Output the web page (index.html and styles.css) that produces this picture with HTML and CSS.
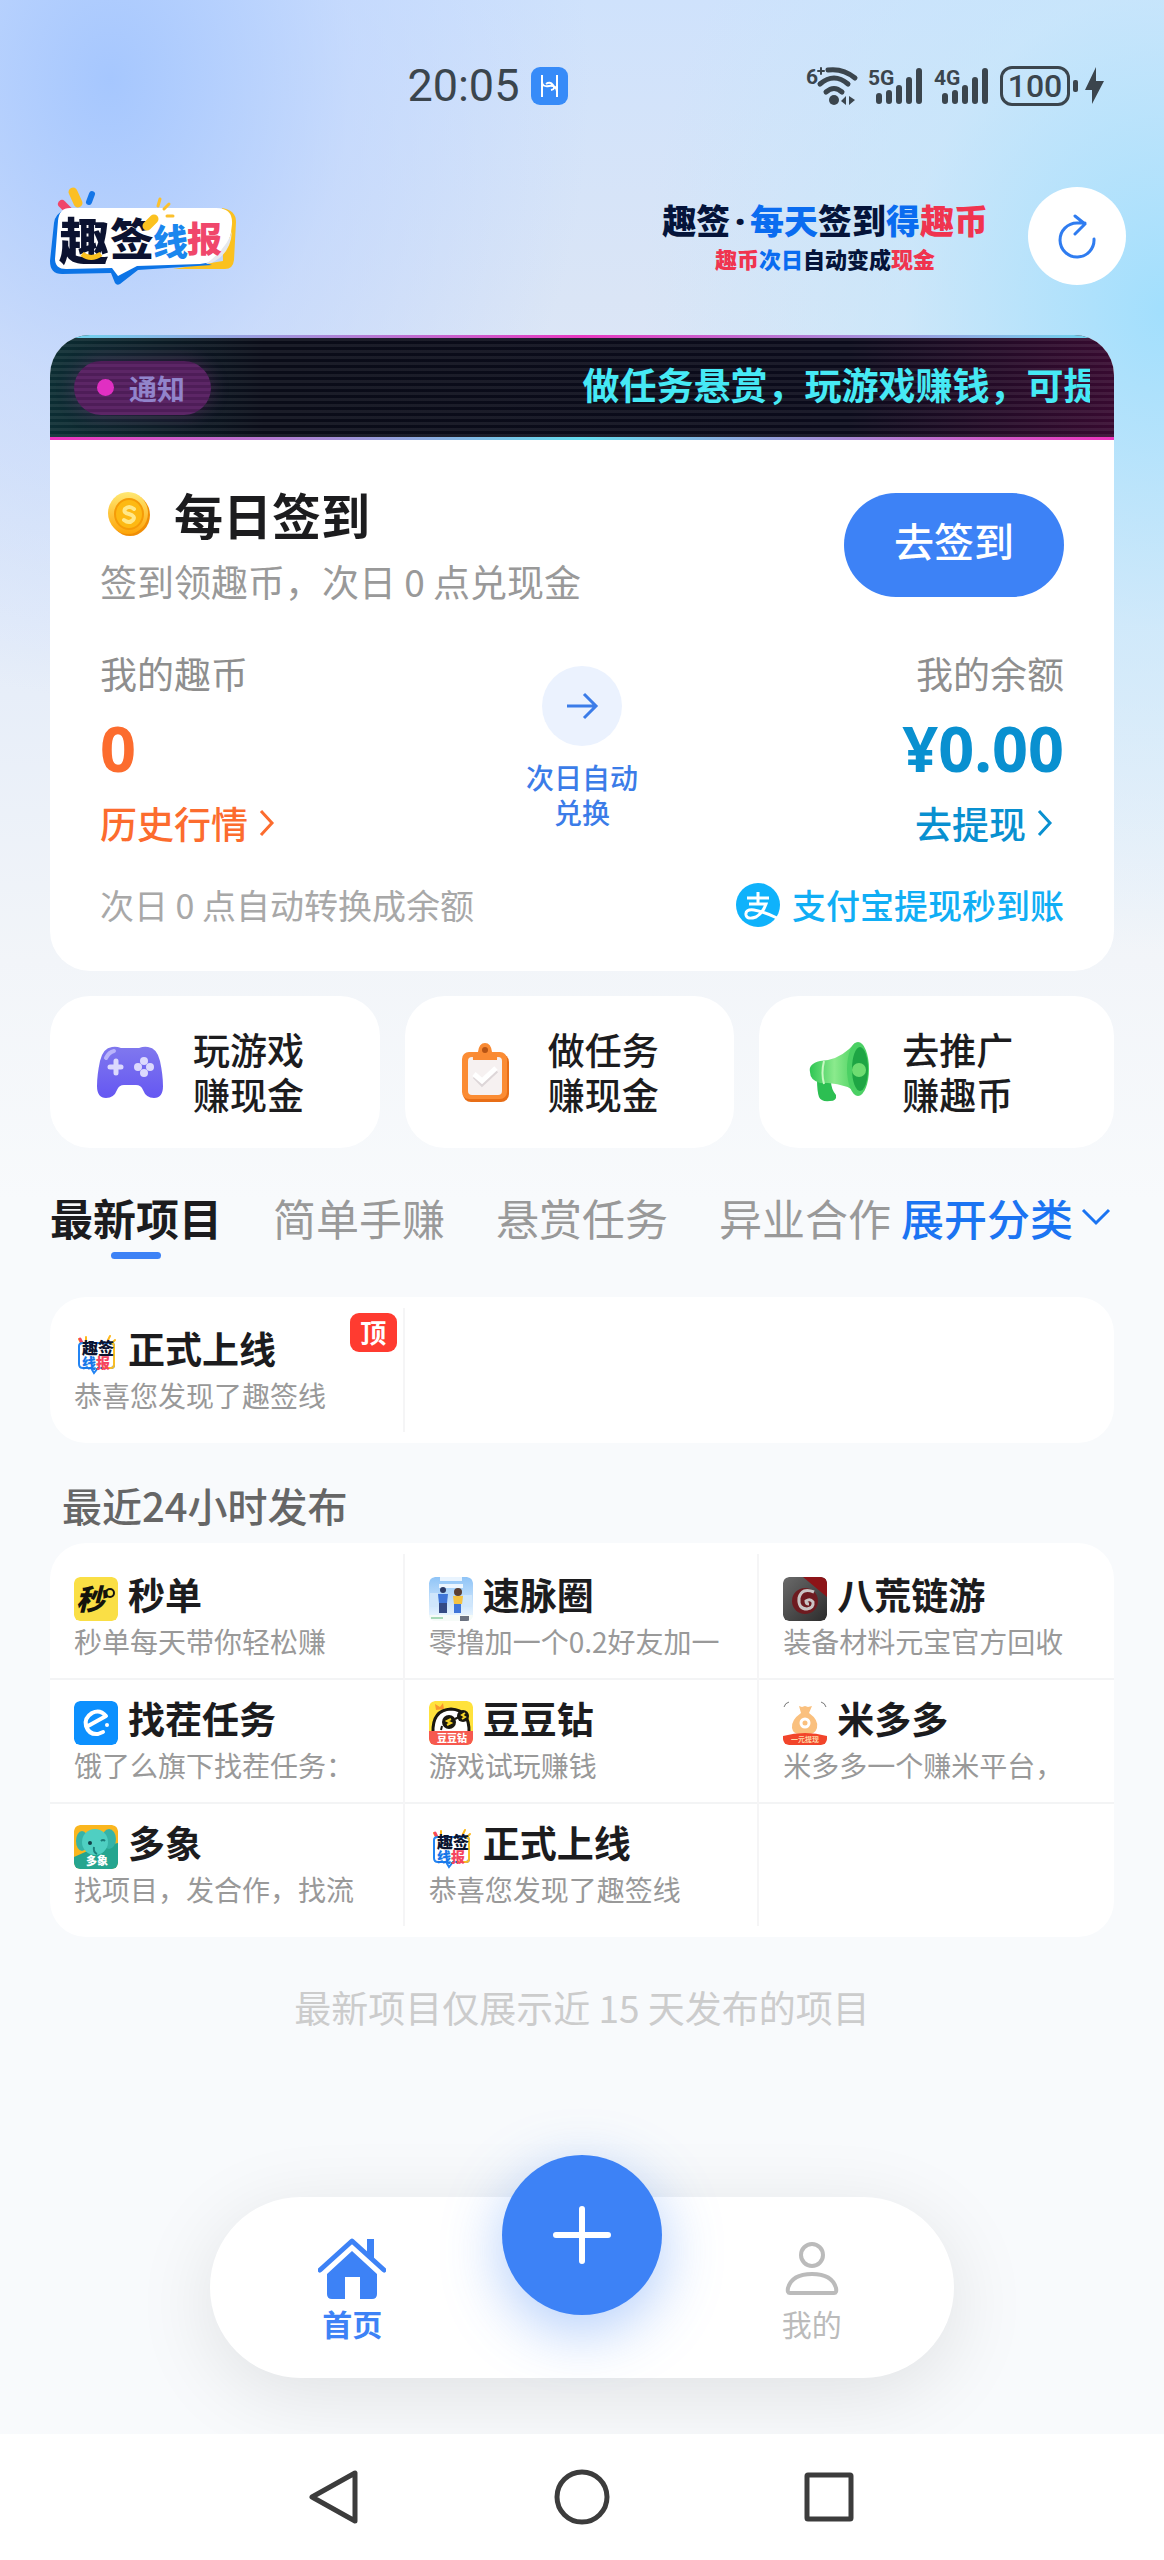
FILE: index.html
```html
<!DOCTYPE html>
<html lang="zh-CN">
<head>
  <meta charset="UTF-8">
  <meta name="viewport" content="width=device-width, initial-scale=1">
  <title>趣签线报</title>
  <link rel="stylesheet" href="styles.css">
</head>
<body>
<svg class="defs" width="0" height="0">
  <defs>
    <symbol id="quqian" viewBox="0 0 44 44">
      <path d="M7 12l-2-4M12 10V6M34 9l2-4M38 12l3-3" stroke="#ffb81c" stroke-width="2" stroke-linecap="round"/>
      <path d="M6 8l2 4" stroke="#f5455f" stroke-width="3" stroke-linecap="round"/>
      <path d="M9 12h28q3 0 3 3v19q0 3-3 3H24l-4 5-3-5H9q-4 0-4-4V15q0-3 4-3z" fill="#fff" stroke="#2384f3" stroke-width="2"/>
      <path d="M37 12q3 0 3 3v19q0 3-3 3h-8" fill="none" stroke="#f8bd26" stroke-width="2"/>
      <text x="8" y="23" font-size="16" font-weight="900" fill="#0c1430">趣签</text>
      <text x="8" y="37" font-size="14" font-weight="900" fill="#1677e8">线<tspan fill="#f5455f">报</tspan></text>
    </symbol>
    <linearGradient id="gold" x1="0" y1="0" x2="0" y2="1">
      <stop offset="0" stop-color="#ffe873"/><stop offset="1" stop-color="#fda509"/>
    </linearGradient>
    <linearGradient id="purple" x1="0" y1="0" x2="0" y2="1">
      <stop offset="0" stop-color="#8078ee"/><stop offset="1" stop-color="#6557f2"/>
    </linearGradient>
    <linearGradient id="green" x1="0" y1="0" x2="1" y2="0">
      <stop offset="0" stop-color="#2fc653"/><stop offset=".5" stop-color="#8bea8d"/><stop offset="1" stop-color="#45cf5c"/>
    </linearGradient>
    <linearGradient id="sky" x1="0" y1="0" x2="0" y2="1">
      <stop offset="0" stop-color="#8fc4f7"/><stop offset="1" stop-color="#f2f9ff"/>
    </linearGradient>
    <linearGradient id="metal" x1="0" y1="0" x2="1" y2="1">
      <stop offset="0" stop-color="#6a6a6a"/><stop offset="1" stop-color="#2c2c2c"/>
    </linearGradient>
  </defs>
</svg>

<div class="page">
  <div class="status">
    <div class="status-left">
      <span class="time">20:05</span>
      <svg width="37" height="38" viewBox="0 0 37 38"><rect width="37" height="38" rx="9" fill="#378bf8"/><path d="M11 8v22M26 8v22M11 15q0 5 7 4t8 5M15 17q4-3 7 1t-2 5" fill="none" stroke="#fff" stroke-width="2"/></svg>
    </div>
    <div class="status-right">
      <svg width="52" height="40" viewBox="0 0 52 40" fill="none" stroke="#3b454d" stroke-linecap="round">
        <text x="0" y="18" font-size="21" font-weight="700" fill="#3b454d" stroke="none" class="num">6</text>
        <path d="M12 5h6M15 2v6" stroke-width="2"/>
        <path d="M22 4q15-2 27 8M14 18q14-12 28 0M20 26q8-7 16 0" stroke-width="5"/>
        <circle cx="28" cy="34" r="5" fill="#3b454d" stroke="none"/>
        <path d="M40 30v9l-5-4zM43 30v9l6-5z" fill="#3b454d" stroke="none"/>
      </svg>
      <svg width="56" height="40" viewBox="0 0 56 40" stroke="#3b454d" stroke-width="6" stroke-linecap="round">
        <text x="0" y="19" font-size="21" font-weight="700" fill="#3b454d" stroke="none" class="num">5G</text>
        <path d="M11 30v5M21 27v8M31 22v13M41 14v21M51 5v30"/>
      </svg>
      <svg width="56" height="40" viewBox="0 0 56 40" stroke="#3b454d" stroke-width="6" stroke-linecap="round">
        <text x="0" y="19" font-size="21" font-weight="700" fill="#3b454d" stroke="none" class="num">4G</text>
        <path d="M11 30v5M21 27v8M31 22v13M41 14v21M51 5v30"/>
      </svg>
      <div class="battery">100</div>
      <svg width="26" height="40" viewBox="0 0 26 40" fill="#3b454d"><path d="M16 1v14h8L12 38V24H5z"/></svg>
    </div>
  </div>

  <header class="header">
    <svg class="logo" width="186" height="102" viewBox="0 0 186 102" role="img" aria-label="趣签线报">
      <g stroke-linecap="round">
        <path d="M12 19l7 7" stroke="#f0466a" stroke-width="8"/>
        <path d="M23 7l5 11" stroke="#fbbf24" stroke-width="9"/>
        <path d="M42 9l-3 8" stroke="#1476e8" stroke-width="6"/>
      </g>
      <path d="M172 23q14 2 14 14l-2 38q-1 9-9 9h-52l50-8z" fill="#fbc11f"/>
      <path d="M14 25Q5 29 4 38L0 76q0 13 12 13l49-1q2 5 4 10 2 3 5 1l18-14 74-5-90-30z" fill="#0c74e6"/>
      <path d="M20 23h146q17 0 16 16-1 20-12 31-7 8-20 9l-63 2-19 10-6-8-46 1Q5 84 5 74l3-38q1-13 12-13z" fill="#fff"/>
      <path d="M182 46q-1 21-17 30-4 3-9 3 22-17 26-33z" fill="#e6e8ee"/>
      <g font-weight="900">
        <text x="9" y="75" font-size="50" fill="#0b1230">趣</text>
        <text x="60" y="71" font-size="44" fill="#0b1230">签</text>
        <text x="103" y="70" font-size="35" fill="#1a86ee">线</text>
        <text x="137" y="67" font-size="35" fill="#f0476b">报</text>
      </g>
      <path d="M32 69q9 7 19 0" fill="none" stroke="#fbc11f" stroke-width="5"/>
      <path d="M97 41l7-7" stroke="#fbc11f" stroke-width="9" stroke-linecap="round"/>
      <path d="M110 14l-2 7M119 19l-5 5M123 31h-6" stroke="#fbc02d" stroke-width="3" stroke-linecap="round"/>
    </svg>
    <div class="slogan">
      <div class="slogan-main"><b>趣签</b><b class="dot">·</b><b class="blue">每天</b><b>签到</b><b class="blue">得</b><b class="red">趣币</b></div>
      <div class="slogan-sub"><b class="red">趣币</b><b class="blue">次日</b><b>自动变成</b><b class="red">现金</b></div>
    </div>
    <button class="refresh" type="button" aria-label="刷新">
      <svg width="40" height="48" viewBox="0 0 40 48" fill="none" stroke="#2f7cf0" stroke-width="3" stroke-linecap="round" stroke-linejoin="round"><path d="M37 27A17 17 0 1 1 20 11h8M18 4l10 8-10 10"/></svg>
    </button>
  </header>

  <main class="main">
    <section class="card">
      <div class="notice">
        <span class="tag"><i></i>通知</span>
        <div class="marquee"><span>做任务悬赏，玩游戏赚钱，可提现</span></div>
      </div>
      <div class="card-body">
        <div class="sign">
          <div>
            <h1 class="sign-title">
              <svg width="42" height="46" viewBox="0 0 42 46"><ellipse cx="22" cy="24" rx="20" ry="21" fill="#f08e05"/><ellipse cx="20" cy="22" rx="20" ry="21" fill="url(#gold)"/><ellipse cx="21" cy="23" rx="14" ry="15" fill="#fdb913" stroke="#f59b07" stroke-width="2"/><path d="M26 18q-5-4-9 0-2 4 4 5 7 2 4 6-4 4-9 0" fill="none" stroke="#ffe889" stroke-width="4" stroke-linecap="round"/></svg>
              每日签到
            </h1>
            <p class="sub">签到领趣币，次日 0 点兑现金</p>
          </div>
          <button class="sign-btn" type="button">去签到</button>
        </div>

        <div class="assets">
          <div class="asset coin">
            <span class="label">我的趣币</span>
            <strong>0</strong>
            <a href="#">历史行情<svg width="18" height="28" viewBox="0 0 18 28"><path d="M3 2l11 12L3 26"/></svg></a>
          </div>
          <div class="exchange">
            <span class="arrow"><svg width="34" height="30" viewBox="0 0 34 30"><path d="M2 15h29M19 3l12 12-12 12"/></svg></span>
            次日自动<br>兑换
          </div>
          <div class="asset balance">
            <span class="label">我的余额</span>
            <strong>¥0.00</strong>
            <a href="#">去提现<svg width="18" height="28" viewBox="0 0 18 28"><path d="M3 2l11 12L3 26"/></svg></a>
          </div>
        </div>

        <div class="tips">
          <span>次日 0 点自动转换成余额</span>
          <span class="alipay">
            <svg width="44" height="44" viewBox="0 0 44 44"><circle cx="22" cy="22" r="22" fill="#0fb2fb"/><path d="M11 15h22M22 9v12M13 21h17q-3 9-10 13-9 3-10-2-1-6 8-5 8 1 23 8" fill="none" stroke="#fff" stroke-width="3"/></svg>
            支付宝提现秒到账
          </span>
        </div>
      </div>
    </section>

    <section class="features">
      <a class="feature" href="#">
        <svg width="76" height="66" viewBox="0 0 76 66"><path d="M20 8q4-1 9 1h18q5-2 9-1 9 1 12 14 3 14 3 25 0 12-9 12-8 0-11-8-2-5-7-5H32q-5 0-7 5-3 8-11 8-9 0-9-12Q5 36 8 22 11 9 20 8z" fill="url(#purple)"/><path d="M14 19q3-6 8-7" stroke="#b9b3fb" stroke-width="4" stroke-linecap="round" fill="none"/><path d="M18 28h11M24 22v12" stroke="#dcd9fd" stroke-width="5" stroke-linecap="round"/><g fill="#dcd9fd"><circle cx="52" cy="22" r="4"/><circle cx="52" cy="34" r="4"/><circle cx="46" cy="28" r="4"/><circle cx="58" cy="28" r="4"/></g></svg>
        <span>玩游戏<br>赚现金</span>
      </a>
      <a class="feature" href="#">
        <svg width="76" height="66" viewBox="0 0 76 66"><rect x="16" y="15" width="46" height="48" rx="8" fill="#e86e17"/><rect x="15" y="13" width="45" height="47" rx="7" fill="#fb8c34"/><rect x="21" y="18" width="34" height="38" rx="4" fill="#f6f1f1"/><path d="M26 21q-1-7 5-8 1-9 7-9t7 9q6 1 5 8z" fill="#f98a33"/><circle cx="38" cy="11" r="3" fill="#b75414"/><path d="M28 37l7 7 14-13" fill="none" stroke="#ddd6d8" stroke-width="6"/><path d="M27 35l8 7 14-13" fill="none" stroke="#fff" stroke-width="5"/></svg>
        <span>做任务<br>赚现金</span>
      </a>
      <a class="feature" href="#">
        <svg width="76" height="66" viewBox="0 0 76 66"><path d="M16 40l14 2q0 8 5 14 1 6-6 6-9 1-11-4-2-6-2-18z" fill="#2cbf52"/><path d="M19 22Q7 25 9 33q0 8 10 11l8 0q20 1 31 12L54 4Q42 18 27 21z" fill="url(#green)"/><path d="M23 22q-3 12 0 23" fill="none" stroke="#c8f8c2" stroke-width="2"/><ellipse cx="57" cy="30" rx="11" ry="27" fill="#4bd064"/><ellipse cx="59" cy="30" rx="8" ry="22" fill="#1ea544"/><circle cx="58" cy="31" r="7" fill="#6edc71"/></svg>
        <span>去推广<br>赚趣币</span>
      </a>
    </section>

    <nav class="tabs">
      <div class="tab-list">
        <a class="active" href="#">最新项目</a>
        <a href="#">简单手赚</a>
        <a href="#">悬赏任务</a>
        <a href="#">异业合作</a>
      </div>
      <a class="more" href="#">展开分类<svg width="30" height="18" viewBox="0 0 30 18"><path d="M2 2l13 13L28 2"/></svg></a>
    </nav>

    <section class="projects">
      <a class="item" href="#">
        <span class="name"><svg width="44" height="44"><use href="#quqian"/></svg>正式上线</span>
        <span class="desc">恭喜您发现了趣签线</span>
        <em class="top">顶</em>
      </a>
    </section>

    <h2 class="heading">最近24小时发布</h2>

    <section class="projects">
      <a class="item" href="#">
        <span class="name"><svg width="44" height="44" viewBox="0 0 44 44"><rect width="44" height="44" rx="6" fill="#fadf45"/><text x="2" y="33" font-size="29" font-weight="900" font-style="italic" fill="#14130c">秒</text><circle cx="36" cy="16" r="4" fill="none" stroke="#14130c" stroke-width="2"/></svg>秒单</span>
        <span class="desc">秒单每天带你轻松赚</span>
      </a>
      <a class="item" href="#">
        <span class="name"><svg width="44" height="44" viewBox="0 0 44 44"><rect width="44" height="44" rx="6" fill="url(#sky)"/><path d="M11 0h22v4H11zM10 7h24v4H10z" fill="#fff" opacity=".8"/><path d="M1 16h8v14H1zM34 18h9v12h-9z" fill="#cfe6fb"/><circle cx="14" cy="13" r="3" fill="#2d3a66"/><path d="M9 17h10l-1 9h-8z" fill="#3f75d8"/><path d="M10 26h8v10h-8z" fill="#344a84"/><circle cx="29" cy="15" r="4" fill="#5c4033"/><path d="M24 19h10l-1 8h-8z" fill="#f5c342"/><path d="M25 27h7v9h-7z" fill="#3f75d8"/><path d="M0 38h44v6H0z" fill="#f6fbf8"/><path d="M2 40h12v2H2z" fill="#a7d9b8"/><path d="M31 39h9v5h-9z" fill="#6b7280"/></svg>速脉圈</span>
        <span class="desc">零撸加一个0.2好友加一</span>
      </a>
      <a class="item" href="#">
        <span class="name"><svg width="44" height="44" viewBox="0 0 44 44"><rect width="44" height="44" rx="6" fill="url(#metal)"/><path d="M20 0h18q6 0 6 6v14z" fill="#8d1418"/><circle cx="22" cy="24" r="13" fill="#6e1b20"/><path d="M31 15q-12-5-15 6-1 11 8 11 7-1 6-7-3-4-7-1 0 3 3 3" fill="none" stroke="#c9c4c4" stroke-width="3"/></svg>八荒链游</span>
        <span class="desc">装备材料元宝官方回收</span>
      </a>
      <a class="item" href="#">
        <span class="name"><svg width="44" height="44" viewBox="0 0 44 44"><rect width="44" height="44" rx="6" fill="#0c90fe"/><path d="M14 25l18-10q-6-7-14-3-8 5-6 13 3 9 12 8l5-2" fill="none" stroke="#fff" stroke-width="4" stroke-linecap="round" stroke-linejoin="round"/><circle cx="33" cy="24" r="2" fill="#fff"/></svg>找茬任务</span>
        <span class="desc">饿了么旗下找茬任务：</span>
      </a>
      <a class="item" href="#">
        <span class="name"><svg width="44" height="44" viewBox="0 0 44 44"><rect width="44" height="44" rx="6" fill="#ffe23c"/><path d="M7 9l-1-6 5 3 3-4 1 6z" fill="#f9972d"/><path d="M4 32Q3 9 22 8q19 1 18 24z" fill="#fff" stroke="#19170f" stroke-width="3"/><circle cx="20" cy="21" r="7" fill="#19170f"/><circle cx="34" cy="15" r="6" fill="#19170f"/><path d="M13 25l-1 4M26 18l4-2" stroke="#19170f" stroke-width="2"/><path d="M22 18l-4 2 4 2-4 2M36 12l-3 2 3 2-3 2" fill="none" stroke="#f5d428" stroke-width="2"/><path d="M0 30h44v8q0 6-6 6H6q-6 0-6-6z" fill="#f6594f"/><text x="8" y="41" font-size="10" font-weight="900" fill="#fff">豆豆钻</text></svg>豆豆钻</span>
        <span class="desc">游戏试玩赚钱</span>
      </a>
      <a class="item" href="#">
        <span class="name"><svg width="44" height="44" viewBox="0 0 44 44"><path d="M1 6q1-4 5-5M38 1q4 1 5 5" fill="none" stroke="#777"/><path d="M16 5l3 1 3-1 3 1 4-1-3 7q10 7 8 15-2 6-8 6h-9q-7 0-8-6-1-8 9-15z" fill="#fac07e"/><circle cx="22" cy="22" r="4" fill="#fac07e" stroke="#fff" stroke-width="3"/><path d="M0 35q22-6 44 0v4q0 5-6 5H6q-6 0-6-5z" fill="#f2452b"/><text x="8" y="41" font-size="7" fill="#ffd9a8">一元提现</text></svg>米多多</span>
        <span class="desc">米多多一个赚米平台，</span>
      </a>
      <a class="item" href="#">
        <span class="name"><svg width="44" height="44" viewBox="0 0 44 44"><rect width="44" height="44" rx="6" fill="#fab61e"/><path d="M0 32q20-10 44-14v20q0 6-6 6H6q-6 0-6-6z" fill="#25a58f"/><ellipse cx="8" cy="16" rx="6" ry="10" fill="#36b3a7"/><ellipse cx="35" cy="14" rx="7" ry="10" fill="#36b3a7"/><circle cx="21" cy="17" r="13" fill="#4fcfc2"/><circle cx="16" cy="18" r="2" fill="#123f48"/><path d="M27 16q2-2 4 0M20 22q-1 5 3 7" fill="none" stroke="#1c7f7b" stroke-width="2"/><text x="12" y="40" font-size="11" font-weight="900" fill="#fff">多象</text></svg>多象</span>
        <span class="desc">找项目，发合作，找流</span>
      </a>
      <a class="item" href="#">
        <span class="name"><svg width="44" height="44"><use href="#quqian"/></svg>正式上线</span>
        <span class="desc">恭喜您发现了趣签线</span>
      </a>
      <div class="item"></div>
    </section>

    <p class="end">最新项目仅展示近 15 天发布的项目</p>
  </main>

  <nav class="tabbar">
    <a class="on" href="#">
      <svg width="68" height="62" viewBox="0 0 68 62" fill="#3d82f6"><path d="M49 1h7v20l-7-7z"/><path d="M2 32L34 3l32 29" fill="none" stroke="#3d82f6" stroke-width="5" stroke-linecap="round" stroke-linejoin="round"/><path d="M34 13l25 23v20q0 5-5 5H42V39H27v22H14q-5 0-5-5V36z"/></svg>
      首页
    </a>
    <button class="add" type="button" aria-label="发布"><svg width="60" height="60" viewBox="0 0 60 60"><path d="M4 30h52M30 4v52" stroke="#fff" stroke-width="6" stroke-linecap="round"/></svg></button>
    <a href="#">
      <svg width="56" height="62" viewBox="0 0 56 62" fill="none" stroke="#bbb" stroke-width="4" stroke-linejoin="round"><circle cx="28" cy="17" r="11"/><path d="M6 55Q3 55 4 50 8 36 28 36t24 14q1 5-2 5z"/></svg>
      我的
    </a>
  </nav>
</div>

<div class="sysnav">
  <button type="button" aria-label="返回"><svg width="56" height="56" viewBox="0 0 56 56"><path d="M49 4v48L6 28z"/></svg></button>
  <button type="button" aria-label="主屏幕"><svg width="56" height="56" viewBox="0 0 56 56"><circle cx="28" cy="28" r="25"/></svg></button>
  <button type="button" aria-label="最近任务"><svg width="56" height="56" viewBox="0 0 56 56"><rect x="5" y="6" width="44" height="44" rx="1"/></svg></button>
</div>
</body>
</html>
```
FILE: styles.css
```css
*{
  margin: 0;
  padding: 0;
  box-sizing: border-box;
}
body{
  min-height: 100vh;
  display: flex;
  flex-direction: column;
  font-family: "Noto Sans CJK SC", "Noto Sans", sans-serif;
  color: #1c1c1e;
  background: #fff;
}
a{
  color: inherit;
  text-decoration: none;
}
button{
  border: 0;
  font-family: inherit;
  cursor: pointer;
}
svg{
  flex: none;
  display: block;
}
.defs{
  position: absolute;
}
.page{
  flex: 1;
  display: flex;
  flex-direction: column;
  overflow: hidden;
  background:
    radial-gradient(ellipse 480px 620px at 110px 80px, #a6c7fe, rgba(190,212,254,.6) 50%, rgba(215,228,252,0)),
    radial-gradient(ellipse 520px 640px at 100% 310px, #a2dffd, rgba(195,231,251,.6) 50%, rgba(215,235,250,0)),
    linear-gradient(#cfe2fc 0, #dae5f6 300px, #e4ecf9 620px, #f2f5f9 960px, #f8fafc 1200px);
}

/* 状态栏 */
.status{
  display: flex;
  align-items: center;
  justify-content: space-between;
  padding: 62px 58px 0 35%;
  height: 110px;
  color: #3b454d;
}
.status svg{
  overflow: visible;
}
.status-left{
  display: flex;
  align-items: center;
  gap: 12px;
}
.time{
  font: 45px/48px Roboto, sans-serif;
}
.num{
  font-family: Roboto, sans-serif;
}
.status-right{
  display: flex;
  align-items: center;
  gap: 10px;
}
.battery{
  position: relative;
  width: 70px;
  height: 40px;
  border: 3px solid #3b454d;
  border-radius: 12px;
  font: 500 32px/34px Roboto, sans-serif;
  text-align: center;
}
.battery::after{
  content: "";
  position: absolute;
  right: -11px;
  top: 11px;
  width: 5px;
  height: 12px;
  border-radius: 2px;
  background: #3b454d;
}

.header{
  display: flex;
  align-items: center;
  padding: 75px 38px 48px 50px;
}
.logo{
  overflow: visible;
}
.slogan{
  margin: 0 40px 0 auto;
  text-align: center;
  color: #05143a;
}
.slogan b{
  font-weight: 900;
}
.slogan-main{
  font-size: 34px;
  line-height: 42px;
}
.slogan-sub{
  font-size: 22px;
  line-height: 32px;
}
.slogan .blue{
  color: #0a6cf0;
}
.slogan .red{
  color: #f0344f;
}
.slogan .dot{
  padding: 0 5px;
  font-family: "Noto Sans", sans-serif;
}
.refresh{
  display: flex;
  align-items: center;
  justify-content: center;
  width: 98px;
  height: 98px;
  border-radius: 50%;
  background: #fff;
}

/* 签到卡片 */
.main{
  padding: 0 50px;
}
.card{
  overflow: hidden;
  border-radius: 40px;
  background: #fff;
}
.notice{
  display: flex;
  align-items: center;
  gap: 26px;
  height: 105px;
  padding: 0 24px;
  background:
    linear-gradient(90deg, #6ad9ef, #e838c0 50%, #6ad9ef) top / 100% 3px no-repeat,
    linear-gradient(90deg, #ee32bd, #63dcee 50%, #ee32bd) bottom / 100% 3px no-repeat,
    repeating-linear-gradient(rgba(255,255,255,0) 0, rgba(255,255,255,0) 3px, rgba(255,255,255,.07) 3px, rgba(255,255,255,.07) 6px),
    linear-gradient(90deg, #0c2d33, #0a0c18 20%, #0b0b1b 75%, #370a30);
}
.tag{
  display: flex;
  align-items: center;
  gap: 15px;
  height: 54px;
  padding: 0 26px 0 23px;
  border-radius: 27px;
  background: repeating-linear-gradient(#4e1d58 0, #4e1d58 3px, #5c2666 3px, #5c2666 6px);
  box-shadow: 0 0 20px rgba(220,50,190,.2);
  color: #9184cb;
  font-size: 28px;
  font-weight: 700;
}
.tag i{
  width: 17px;
  height: 17px;
  border-radius: 50%;
  background: #e02fc2;
}
.marquee{
  flex: 1;
  overflow: hidden;
  padding: 0 0 8px 34%;
  color: #46e9f5;
  font-size: 37px;
  font-weight: 700;
  line-height: 50px;
  white-space: nowrap;
}
.card-body{
  padding: 44px 50px 42px;
}
.sign,
.assets,
.tips{
  display: flex;
  align-items: center;
  justify-content: space-between;
}
.sign-title{
  display: flex;
  align-items: center;
  gap: 24px;
  padding-left: 8px;
  font-size: 49px;
  line-height: 60px;
}
.sub{
  margin-top: 13px;
  color: #999;
  font-size: 37px;
  line-height: 48px;
}
.sign-btn{
  width: 220px;
  height: 104px;
  padding-bottom: 10px;
  border-radius: 52px;
  background: #3d82f6;
  color: #fff;
  font-size: 40px;
  font-weight: 500;
}
.assets{
  margin-top: 44px;
}
.asset{
  flex: 1;
  display: flex;
  flex-direction: column;
  gap: 16px;
  font-size: 37px;
  line-height: 48px;
}
.asset .label{
  color: #8e8e8e;
}
.asset strong{
  font: 700 63px/70px "Noto Sans", sans-serif;
}
.asset a{
  display: flex;
  align-items: center;
  gap: 10px;
  font-weight: 500;
}
.asset svg,
.exchange svg,
.more svg{
  fill: none;
  stroke: currentColor;
  stroke-width: 3;
}
.coin strong,
.coin a{
  color: #fc6c2e;
}
.balance{
  align-items: flex-end;
}
.balance strong,
.balance a{
  color: #0990d0;
}
.balance a{
  padding-right: 10px;
}
.exchange{
  color: #3b7ce8;
  font-size: 28px;
  font-weight: 500;
  line-height: 35px;
  text-align: center;
}
.arrow{
  display: flex;
  align-items: center;
  justify-content: center;
  width: 80px;
  height: 80px;
  margin: 0 auto 14px;
  border-radius: 50%;
  background: #ebf2fe;
}
.tips{
  margin-top: 34px;
  color: #a8a8a8;
  font-size: 34px;
  line-height: 48px;
}
.alipay{
  display: flex;
  align-items: center;
  gap: 12px;
  color: #10aef5;
  font-weight: 500;
}

.features{
  display: grid;
  grid-template-columns: repeat(3, 1fr);
  margin-top: 25px;
}
.feature{
  display: flex;
  align-items: center;
  gap: 25px;
  height: 152px;
  padding-left: 42px;
  border-radius: 40px;
  background: #fff;
  font-size: 37px;
  font-weight: 500;
  line-height: 45px;
}
.feature:not(:last-child){
  margin-right: 25px;
}

/* 分类 */
.tabs{
  display: flex;
  justify-content: space-between;
  margin-top: 39px;
  font-size: 43px;
  line-height: 60px;
  white-space: nowrap;
}
.tab-list{
  flex: 1;
  min-width: 0;
  display: flex;
  gap: 51px;
  overflow: hidden;
  color: #999;
}
.tab-list .active{
  color: #1c1c1e;
  font-weight: 700;
}
.active::after{
  content: "";
  display: block;
  width: 50px;
  height: 7px;
  margin: 5px auto 0;
  border-radius: 4px;
  background: #3d82f6;
}
.more{
  display: flex;
  align-items: center;
  gap: 8px;
  height: 60px;
  padding: 0 3px 0 8px;
  color: #1b74f2;
  font-weight: 500;
}

.projects{
  display: grid;
  grid-template-columns: repeat(3, 1fr);
  overflow: hidden;
  padding: 11px 0;
  border-radius: 36px;
  background: #fff;
}
.tabs + .projects{
  margin-top: 38px;
}
.item{
  position: relative;
  height: 124px;
  padding: 23px 0 0 24px;
  border-right: 2px solid #f5f5f6;
}
.item:nth-child(3n){
  border-right: 0;
}
.item:nth-child(n+4)::before{
  content: "";
  position: absolute;
  top: 0;
  left: 0;
  width: 100%;
  height: 2px;
  background: #f3f4f5;
}
.name{
  display: flex;
  align-items: flex-start;
  gap: 10px;
  height: 44px;
  font-size: 37px;
  font-weight: 700;
  line-height: 34px;
}
.name svg{
  border-radius: 6px;
}
.desc{
  display: block;
  color: #999;
  font-size: 28px;
  line-height: 40px;
  white-space: nowrap;
}
.top{
  position: absolute;
  top: 5px;
  right: 6px;
  width: 47px;
  height: 39px;
  border-radius: 9px;
  background: #ff3b30;
  color: #fff;
  font-size: 26px;
  font-style: normal;
  font-weight: 700;
  line-height: 38px;
  text-align: center;
}
.heading{
  margin: 34px 0 10px;
  padding-left: 12px;
  color: #666;
  font-size: 40px;
  font-weight: 500;
  line-height: 56px;
}
.end{
  margin-top: 46px;
  color: #ccc;
  font-size: 37px;
  line-height: 48px;
  text-align: center;
}

/* 底部导航 */
.tabbar{
  display: grid;
  grid-template-columns: repeat(3, 1fr);
  justify-items: center;
  width: 64%;
  height: 181px;
  margin: auto auto 56px;
  padding: 0 28px;
  border-radius: 91px;
  background: #fff;
  box-shadow: 0 16px 80px rgba(0,0,0,.1);
}
.tabbar a{
  display: flex;
  flex-direction: column;
  align-items: center;
  gap: 3px;
  padding-top: 41px;
  color: #bbb;
  font-size: 30px;
  line-height: 40px;
}
.tabbar .on{
  color: #3d82f6;
  font-weight: 700;
}
.add{
  display: flex;
  align-items: center;
  justify-content: center;
  width: 160px;
  height: 160px;
  margin-top: -42px;
  border-radius: 50%;
  background: #3d82f6;
  box-shadow: 0 16px 60px rgba(61,130,246,.4);
}
.sysnav{
  display: flex;
  justify-content: center;
  gap: 192px;
  padding: 35px 0;
  background: #fff;
}
.sysnav button{
  background: none;
}
.sysnav svg{
  fill: none;
  stroke: #3c3c3c;
  stroke-width: 5;
  stroke-linejoin: round;
}
```
